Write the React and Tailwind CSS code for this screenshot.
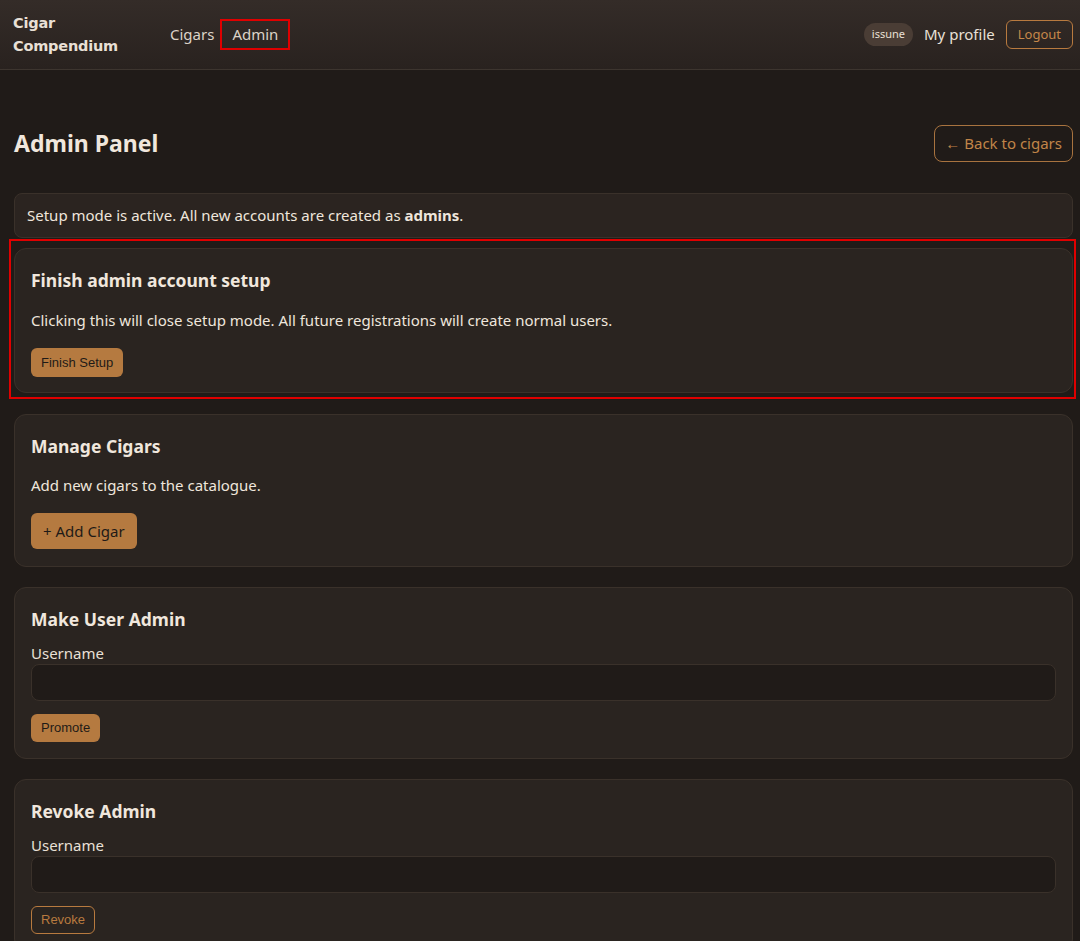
import React from "react";

const font = { fontFamily: '"Noto Sans", "Open Sans", sans-serif' };
const btnFont = { fontFamily: '"Liberation Sans", Arial, sans-serif' };

function Card({ title, children, className = "" }) {
  return (
    <div className={`bg-[#2a2420] border border-[#3a312a] rounded-xl px-[16px] pt-[18px] ${className}`}>
      <h2 className="text-[17.5px] font-bold text-[#f0e7dd] leading-[26px]">{title}</h2>
      {children}
    </div>
  );
}

function UsernameForm({ title, action, outline }) {
  return (
    <Card title={title} className="pb-[16px]">
      <label className="block mt-[11px] text-[15px] leading-[20px] text-[#e9e0d6]">Username</label>
      <input className="block w-full h-[37px] mt-[1px] bg-[#201b18] border border-[#3a312a] rounded-lg px-3 text-[#f0e7dd] outline-none" />
      {outline ? (
        <button className="mt-[13px] px-[9px] h-[28px] rounded-md border border-[#b87a3f] text-[#b87a3f] text-[13px]" style={btnFont}>
          {action}
        </button>
      ) : (
        <button className="mt-[13px] px-[10px] h-[28px] rounded-md bg-[#b57a40] text-[#1f1a17] text-[13px]" style={btnFont}>
          {action}
        </button>
      )}
    </Card>
  );
}

export default function App() {
  return (
    <div className="h-[941px] overflow-hidden bg-[#201b18] text-[#efe6dc]" style={font}>
      {/* HEADER */}
      <header className="h-[70px] bg-gradient-to-b from-[#342c28] to-[#29221f] border-b border-[#3d352f] flex items-center justify-between pl-[13px] pr-[7px]">
        <div className="flex items-center">
          <div className="text-[14.5px] font-bold leading-[23px] text-[#e9e0d6] w-[157px]" style={{ fontFamily: '"DejaVu Sans", Verdana, sans-serif', letterSpacing: "-0.2px" }}>
            Cigar<br />Compendium
          </div>
          <nav className="flex items-center gap-[8px] text-[15px] text-[#ddd3c8]">
            <span>Cigars</span>
            <span className="px-[10px] py-[2px] outline outline-2 outline-[#e00000]">Admin</span>
          </nav>
        </div>
        <div className="flex items-center">
          <span className="bg-[#4a3d35] text-[#e9e0d6] text-[11px] rounded-full px-[8px] h-[23px] flex items-center">issune</span>
          <span className="ml-[11px] text-[15px] text-[#e9e0d6]">My profile</span>
          <button className="ml-[11px] h-[29px] px-[11px] rounded-md border border-[#b87a3f] text-[#c5874a] text-[13px]">Logout</button>
        </div>
      </header>

      {/* MAIN */}
      <main className="pl-[14px] pr-[7px] pt-[55px] pb-10">
        <div className="flex items-center justify-between">
          <h1 className="text-[23px] font-bold text-[#f0e7dd]">Admin Panel</h1>
          <button className="h-[37px] px-[10px] rounded-lg border border-[#a8733f] text-[#c08548] text-[15px]">← Back to cigars</button>
        </div>

        <div className="mt-[31px] bg-[#2b2420] border border-[#3a312a] rounded-lg h-[45px] px-[12px] flex items-center text-[15px] text-[#efe6dc]">
          <span>Setup mode is active. All new accounts are created as <b>admins</b>.</span>
        </div>

        <div className="mt-[3px] -ml-[3px] -mr-[1px] outline outline-2 outline-[#e00000] pl-[3px] pr-[1px] pt-[7px] pb-[4px]">
          <Card title="Finish admin account setup" className="pb-[15px]">
            <p className="mt-[17px] text-[15px] text-[#efe6dc] leading-[20px]">Clicking this will close setup mode. All future registrations will create normal users.</p>
            <button className="mt-[18px] h-[29px] px-[10px] rounded-md bg-[#b57a40] text-[#1f1a17] text-[13px]" style={btnFont}>
              Finish Setup
            </button>
          </Card>
        </div>

        <div className="mt-[17px] flex flex-col gap-[20px]">
          <Card title="Manage Cigars" className="pb-[17px]">
            <p className="mt-[16px] text-[15px] text-[#efe6dc] leading-[20px]">Add new cigars to the catalogue.</p>
            <button className="mt-[18px] h-[36px] px-[12px] rounded-md bg-[#b57a40] text-[#1f1a17] text-[15px]">+ Add Cigar</button>
          </Card>
          <UsernameForm title="Make User Admin" action="Promote" />
          <UsernameForm title="Revoke Admin" action="Revoke" outline />
        </div>
      </main>
    </div>
  );
}
